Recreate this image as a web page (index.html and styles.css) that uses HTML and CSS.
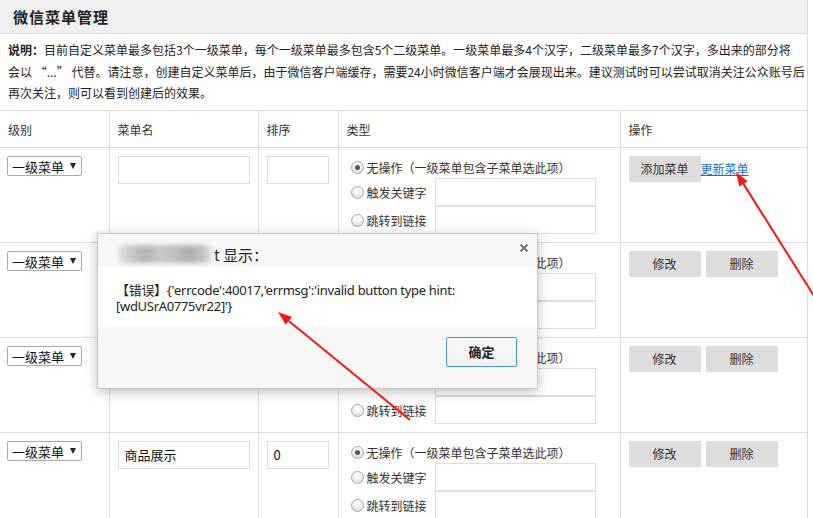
FILE: index.html
```html
<!DOCTYPE html>
<html lang="zh-CN">
<head>
<meta charset="utf-8">
<title>微信菜单管理</title>
<link rel="stylesheet" href="styles.css">
</head>
<body>
<div class="page">
  <div class="hd">微信菜单管理</div>
  <div class="desc"><b>说明：</b>目前自定义菜单最多包括3个一级菜单，每个一级菜单最多包含5个二级菜单。一级菜单最多4个汉字，二级菜单最多7个汉字，多出来的部分将<br>会以 “...” 代替。请注意，创建自定义菜单后，由于微信客户端缓存，需要24小时微信客户端才会展现出来。建议测试时可以尝试取消关注公众账号后<br>再次关注，则可以看到创建后的效果。</div>
  <table class="grid">
    <colgroup>
      <col class="w1"><col class="w2"><col class="w3"><col class="w4"><col class="w5">
    </colgroup>
    <thead>
      <tr class="head"><th>级别</th><th>菜单名</th><th>排序</th><th>类型</th><th>操作</th></tr>
    </thead>
    <tbody>
      <tr class="row">
        <td><div class="sel"><span>一级菜单</span><i class="tri"></i></div></td>
        <td><div class="inp name"></div></td>
        <td><div class="inp sort"></div></td>
        <td class="type">
          <div class="opt o1"><span class="radio on"></span><span class="lbl">无操作（一级菜单包含子菜单选此项）</span></div>
          <div class="opt"><span class="radio"></span><span class="lbl fix">触发关键字</span><div class="inp wide"></div></div>
          <div class="opt"><span class="radio"></span><span class="lbl fix">跳转到链接</span><div class="inp wide"></div></div>
        </td>
        <td class="ops"><span class="btn">添加菜单</span><a class="lnk" href="#">更新菜单</a></td>
      </tr>
      <tr class="row">
        <td><div class="sel"><span>一级菜单</span><i class="tri"></i></div></td>
        <td><div class="inp name"></div></td>
        <td><div class="inp sort"></div></td>
        <td class="type">
          <div class="opt o1"><span class="radio on"></span><span class="lbl">无操作（一级菜单包含子菜单选此项）</span></div>
          <div class="opt"><span class="radio"></span><span class="lbl fix">触发关键字</span><div class="inp wide"></div></div>
          <div class="opt"><span class="radio"></span><span class="lbl fix">跳转到链接</span><div class="inp wide"></div></div>
        </td>
        <td class="ops"><span class="btn">修改</span><span class="btn">删除</span></td>
      </tr>
      <tr class="row">
        <td><div class="sel"><span>一级菜单</span><i class="tri"></i></div></td>
        <td><div class="inp name"></div></td>
        <td><div class="inp sort"></div></td>
        <td class="type">
          <div class="opt o1"><span class="radio on"></span><span class="lbl">无操作（一级菜单包含子菜单选此项）</span></div>
          <div class="opt"><span class="radio"></span><span class="lbl fix">触发关键字</span><div class="inp wide"></div></div>
          <div class="opt"><span class="radio"></span><span class="lbl fix">跳转到链接</span><div class="inp wide"></div></div>
        </td>
        <td class="ops"><span class="btn">修改</span><span class="btn">删除</span></td>
      </tr>
      <tr class="row">
        <td><div class="sel"><span>一级菜单</span><i class="tri"></i></div></td>
        <td><div class="inp name">商品展示</div></td>
        <td><div class="inp sort">0</div></td>
        <td class="type">
          <div class="opt o1"><span class="radio on"></span><span class="lbl">无操作（一级菜单包含子菜单选此项）</span></div>
          <div class="opt"><span class="radio"></span><span class="lbl fix">触发关键字</span><div class="inp wide"></div></div>
          <div class="opt"><span class="radio"></span><span class="lbl fix">跳转到链接</span><div class="inp wide"></div></div>
        </td>
        <td class="ops"><span class="btn">修改</span><span class="btn">删除</span></td>
      </tr>
    </tbody>
  </table>
</div>

<div class="dialog">
  <div class="dlg-title"><span class="blur"></span><span class="tt">t 显示：</span>
    <svg class="close" width="8" height="8" viewBox="0 0 8 8"><path d="M0.5 0.5 L7.5 7.5 M7.5 0.5 L0.5 7.5" stroke="#777" stroke-width="2"/></svg>
  </div>
  <div class="dlg-body">【错误】{'errcode':40017,'errmsg':'invalid button type hint:<br>[wdUSrA0775vr22]'}</div>
  <div class="dlg-foot"><span class="ok">确定</span></div>
</div>

<svg class="arrows" width="813" height="518" viewBox="0 0 813 518">
  <line x1="814" y1="296" x2="743.4" y2="183.9" stroke="#f21818" stroke-width="2"/>
  <polygon points="736,172 747.7,181.2 739.2,186.5" fill="#f21818"/>
  <line x1="410" y1="420" x2="288.8" y2="320.9" stroke="#f21818" stroke-width="2"/>
  <polygon points="278,312 292.0,317.0 285.7,324.8" fill="#f21818"/>
</svg>
</body>
</html>
```

FILE: styles.css
```css
html, body {
  margin: 0;
  padding: 0;
  background: #fff;
  overflow: hidden;
}
body {
  font-family: "Noto Sans CJK SC", "Noto Sans", sans-serif;
  font-size: 12px;
  color: #333;
  width: 813px;
  height: 518px;
  position: relative;
}
.page {
  width: 807px;
  border-right: 1px solid #ddd;
}
.hd {
  height: 33px;
  background: #f0f0f0;
  border-bottom: 1px solid #ddd;
  padding-left: 13px;
  font-size: 15px;
  font-weight: bold;
  letter-spacing: 1px;
  line-height: 33px;
  color: #222;
}
.desc {
  box-sizing: border-box;
  height: 76px;
  padding: 5px 8px 0;
  line-height: 21.5px;
  color: #222;
  white-space: nowrap;
}
.desc b { color: #222; }
.grid {
  border-collapse: collapse;
  table-layout: fixed;
  width: 807px;
}
.w1 { width: 109px; }
.w2 { width: 149px; }
.w3 { width: 80px; }
.w4 { width: 282px; }
.w5 { width: 187px; }
.grid th, .grid td {
  border: 1px solid #ddd;
  padding: 0;
}
.grid tr > :first-child { border-left: none; }
.grid tr > :last-child { border-right: none; }
.head th {
  height: 36px;
  text-align: left;
  font-weight: normal;
  padding-left: 8px;
  color: #333;
}
.row td {
  height: 95px;
  vertical-align: top;
  padding: 8px 0 0 8px;
  box-sizing: border-box;
}
.row td:first-child { padding-left: 7px; }
.sel {
  box-sizing: border-box;
  width: 75px;
  height: 20px;
  border: 1px solid #a9a9a9;
  border-radius: 2px;
  display: flex;
  align-items: center;
  padding-left: 4px;
  font-size: 13px;
  color: #111;
}
.tri {
  margin-left: auto;
  margin-right: 5px;
  width: 0;
  height: 0;
  border-left: 3.5px solid transparent;
  border-right: 3.5px solid transparent;
  border-top: 6px solid #222;
}
.inp {
  box-sizing: border-box;
  border: 1px solid #ddd;
  height: 28px;
  background: #fff;
  font-size: 13px;
  color: #111;
  line-height: 26px;
  padding-left: 6px;
}
.name { width: 132px; }
.sort { width: 62px; }
.row td.type { padding-left: 12px; }
.opt {
  display: flex;
  align-items: center;
  height: 28px;
}
.opt.o1 { height: 22px; }
.radio {
  box-sizing: border-box;
  width: 13px;
  height: 13px;
  border-radius: 50%;
  border: 1px solid #a8a8a8;
  background: radial-gradient(circle at 50% 30%, #fff 0, #f2f2f2 40%, #d6d6d6 100%);
  margin-right: 3px;
  position: relative;
  flex: none;
}
.radio.on::after {
  content: "";
  position: absolute;
  left: 3px;
  top: 3px;
  width: 5px;
  height: 5px;
  border-radius: 50%;
  background: #555;
}
.lbl { color: #333; white-space: nowrap; }
.lbl.fix { width: 68px; }
.wide { width: 161px; }
.ops { white-space: nowrap; }
.btn {
  display: inline-block;
  width: 72px;
  height: 26px;
  line-height: 26px;
  background: #ddd;
  text-align: center;
  color: #333;
  vertical-align: top;
  margin-right: 5px;
}
.lnk {
  color: #1a6fc9;
  text-decoration: underline;
  margin-left: -5px;
  line-height: 26px;
  vertical-align: top;
}

.dialog {
  position: absolute;
  left: 97px;
  top: 233px;
  width: 441px;
  box-sizing: border-box;
  border: 1px solid #c8c8c8;
  box-shadow: 0 3px 12px rgba(0, 0, 0, 0.25);
  background: #f7f7f7;
  z-index: 5;
  font-family: "Noto Sans", "Noto Sans CJK SC", sans-serif;
}
.dlg-title {
  position: relative;
  height: 33px;
  display: flex;
  align-items: flex-end;
  padding-left: 20px;
  font-size: 15px;
  color: #222;
  box-sizing: border-box;
  padding-bottom: 2px;
}
.blur {
  display: inline-block;
  width: 95px;
  height: 18px;
  margin-bottom: 2px;
  background: linear-gradient(90deg, #e4e4e4 0, #c6c6c6 15%, #b3b3b3 30%, #c9c9c9 45%, #bdbdbd 60%, #adadad 75%, #c2c2c2 90%, #ededed 100%);
  filter: blur(2px);
  border-radius: 3px;
}
.tt { margin-left: 1px; font-family: "Noto Sans CJK SC", sans-serif; }
.close {
  position: absolute;
  right: 9px;
  top: 10px;
}
.dlg-body {
  background: #fff;
  height: 60px;
  box-sizing: border-box;
  padding: 15px 0 0 18px;
  font-size: 13px;
  letter-spacing: -0.3px;
  line-height: 16px;
  color: #222;
  white-space: nowrap;
}
.dlg-foot {
  height: 61px;
  box-sizing: border-box;
  padding: 10px 20px 0 0;
  display: flex;
  justify-content: flex-end;
  align-items: flex-start;
}
.ok {
  box-sizing: border-box;
  width: 71px;
  height: 30px;
  border: 1px solid #4a8ee6;
  border-radius: 2px;
  background: linear-gradient(#fafafa, #f0f0f0);
  text-align: center;
  line-height: 28px;
  font-weight: bold;
  font-size: 13px;
  color: #222;
  font-family: "Noto Sans CJK SC", sans-serif;
}
.arrows {
  position: absolute;
  left: 0;
  top: 0;
  z-index: 10;
  pointer-events: none;
}
```
